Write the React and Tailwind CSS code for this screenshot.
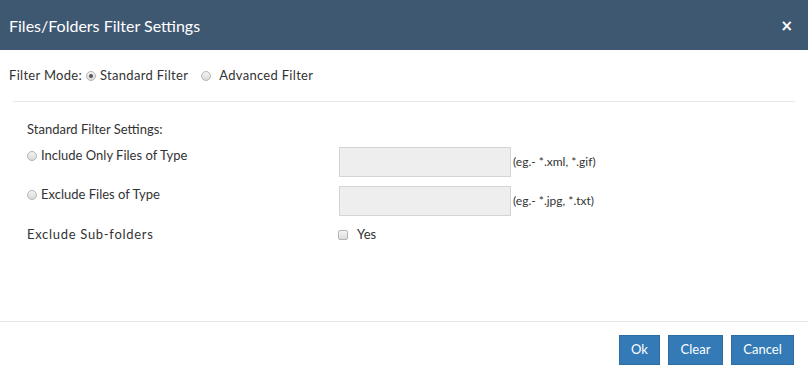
import React, { useState } from 'react';

const Radio = ({ checked, onClick }) => (
  <span
    onClick={onClick}
    className="inline-flex items-center justify-center w-[10px] h-[10px] rounded-full border border-[#b5b5b5] bg-gradient-to-b from-[#f4f4f4] to-[#d9d9d9] shrink-0"
  >
    {checked && <span className="w-[4px] h-[4px] rounded-full bg-[#555]" />}
  </span>
);

const App = () => {
  const [mode, setMode] = useState('standard');
  const [filter, setFilter] = useState('');

  return (
    <div className="w-[808px] h-[377px] bg-white flex flex-col text-[13px] text-[#333] font-['Lato',sans-serif]">
      {/* Header */}
      <div className="h-[50px] bg-[#3f5872] flex items-center justify-between pl-[9px] pr-[15px] pt-[2px] shrink-0">
        <h1 className="text-white text-[16px] font-['Lato',sans-serif]">Files/Folders Filter Settings</h1>
        <span className="text-white text-[15px] font-bold font-['DejaVu_Sans',sans-serif] leading-none">×</span>
      </div>

      {/* Filter mode */}
      <div className="h-[51px] flex items-center pl-[9px] tracking-[0.3px]">
        <span>Filter Mode:</span>
        <span className="ml-[4px] flex items-center gap-[4px]" onClick={() => setMode('standard')}>
          <Radio checked={mode === 'standard'} />
          <span>Standard Filter</span>
        </span>
        <span className="ml-[13px] flex items-center gap-[8px]" onClick={() => setMode('advanced')}>
          <Radio checked={mode === 'advanced'} />
          <span>Advanced Filter</span>
        </span>
      </div>
      <div className="mx-[13px] border-t border-[#e8e8e8]" />

      {/* Standard filter settings */}
      <div className="flex-1 pl-[27px] pt-[18px]">
        <div className="leading-[18px]">Standard Filter Settings:</div>
        <div className="mt-[9px] flex items-start h-[30px]">
          <div className="w-[312px] h-[18px] flex items-center gap-[4px]" onClick={() => setFilter('include')}>
            <Radio checked={filter === 'include'} />
            <span>Include Only Files of Type</span>
          </div>
          <input className="w-[172px] h-[30px] bg-[#eeeeee] border border-[#d4d4d4] outline-none" />
          <span className="ml-[2px] self-center text-[12px]">(eg.- *.xml, *.gif)</span>
        </div>
        <div className="mt-[9px] flex items-start h-[30px]">
          <div className="w-[312px] h-[18px] flex items-center gap-[4px]" onClick={() => setFilter('exclude')}>
            <Radio checked={filter === 'exclude'} />
            <span>Exclude Files of Type</span>
          </div>
          <input className="w-[172px] h-[30px] bg-[#eeeeee] border border-[#d4d4d4] outline-none" />
          <span className="ml-[2px] self-center text-[12px]">(eg.- *.jpg, *.txt)</span>
        </div>
        <div className="mt-[10px] flex items-center h-[18px]">
          <div className="w-[311px] tracking-[0.7px]">Exclude Sub-folders</div>
          <span className="w-[10px] h-[10px] rounded-[2px] border border-[#b5b5b5] bg-gradient-to-b from-[#f4f4f4] to-[#dcdcdc]" />
          <span className="ml-[9px]">Yes</span>
        </div>
      </div>

      {/* Footer */}
      <div className="border-t border-[#e5e5e5] h-[56px] flex items-start justify-end gap-[8px] pr-[14px] pt-[13px] shrink-0">
        <button className="w-[41px] h-[30px] bg-[#337ab7] border border-[#2e6da4] text-white text-[13px]">Ok</button>
        <button className="w-[55px] h-[30px] bg-[#337ab7] border border-[#2e6da4] text-white text-[13px]">Clear</button>
        <button className="w-[63px] h-[30px] bg-[#337ab7] border border-[#2e6da4] text-white text-[13px]">Cancel</button>
      </div>
    </div>
  );
};

export default App;
